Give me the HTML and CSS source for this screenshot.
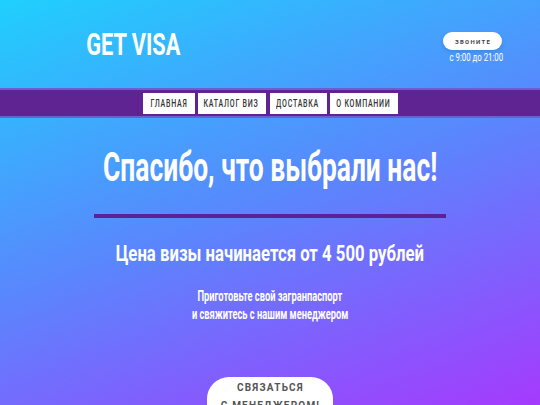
FILE: index.html
```html
<!DOCTYPE html>
<html lang="ru">
<head>
<meta charset="utf-8">
<link rel="stylesheet" href="styles.css">
</head>
<body>
<div class="page">
  <header class="top">
    <div class="logo"><span class="cond">GET VISA</span></div>
    <div class="contact">
      <button class="call">ЗВОНИТЕ</button>
      <div class="hours"><span class="cond">с 9:00 до 21:00</span></div>
    </div>
  </header>
  <nav class="nav">
    <a class="item w1"><span class="cond">ГЛАВНАЯ</span></a>
    <a class="item w2"><span class="cond">КАТАЛОГ ВИЗ</span></a>
    <a class="item w3"><span class="cond">ДОСТАВКА</span></a>
    <a class="item w4"><span class="cond">О КОМПАНИИ</span></a>
  </nav>
  <main class="hero">
    <h1 class="title"><span class="cond">Спасибо, что выбрали нас!</span></h1>
    <div class="rule"></div>
    <h2 class="price"><span class="cond">Цена визы начинается от 4 500 рублей</span></h2>
    <p class="note"><span class="cond">Приготовьте свой загранпаспорт</span><span class="cond">и свяжитесь с нашим менеджером</span></p>
    <button class="cta"><span>СВЯЗАТЬСЯ</span><span>С МЕНЕДЖЕРОМ!</span></button>
  </main>
</div>
</body>
</html>
```
FILE: styles.css
```css
* { box-sizing: border-box; }
html, body { margin: 0; padding: 0; }
body {
  width: 540px;
  height: 405px;
  overflow: hidden;
  font-family: Roboto, "Liberation Sans", sans-serif;
  color: #fff;
}
.page {
  width: 540px;
  height: 405px;
  overflow: hidden;
  background: linear-gradient(160deg, #1fd0fd 0%, #5a86fd 50%, #a53afd 100%);
  display: flex;
  flex-direction: column;
}
.cond {
  display: inline-block;
  white-space: nowrap;
  transform-origin: center;
}
.top {
  flex: 0 0 88px;
  display: flex;
  justify-content: space-between;
  padding: 0 38px 0 86px;
}
.logo {
  font-weight: bold;
  font-size: 32px;
  line-height: 32px;
  padding-top: 28px;
  width: 95px;
  display: flex;
  justify-content: center;
}
.logo .cond { transform: scaleX(0.68); }
.contact {
  padding-top: 32px;
  display: flex;
  flex-direction: column;
  align-items: flex-end;
}
.call {
  width: 59px;
  height: 18px;
  border: none;
  border-radius: 9px;
  background: #fff;
  color: #444;
  font-family: Roboto, sans-serif;
  font-size: 6px;
  font-weight: bold;
  letter-spacing: 1.3px;
  padding: 0 0 0 1px;
  box-shadow: 0 2px 4px rgba(0,0,0,0.12);
}
.hours {
  font-size: 10px;
  line-height: 12px;
  margin-top: 2px;
  width: 52px;
  display: flex;
  justify-content: center;
}
.hours .cond { transform: scaleX(0.78); }
.nav {
  flex: 0 0 30px;
  background: #5f2392;
  border-top: 2px solid #6b5fd2;
  border-bottom: 2px solid #6b5fd2;
  display: flex;
  justify-content: center;
  align-items: center;
  gap: 3px;
}
.item {
  background: #fff;
  color: #333;
  font-size: 11px;
  font-weight: 500;
  letter-spacing: 1.2px;
  height: 21px;
  display: flex;
  align-items: center;
  justify-content: center;
}
.item .cond { transform: scaleX(0.64); }
.w1 { width: 52px; }
.w2 { width: 68px; }
.w3 { width: 57px; margin-left: 1px; }
.w4 { width: 68px; }
.hero {
  display: flex;
  flex-direction: column;
  align-items: center;
}
.title {
  margin: 30px 0 0;
  font-size: 40px;
  line-height: 40px;
  font-weight: bold;
  width: 340px;
  display: flex;
  justify-content: center;
}
.title .cond { transform: scaleX(0.66); }
.rule {
  width: 352px;
  height: 4px;
  background: #5a2296;
  margin-top: 26px;
}
.price {
  margin: 23px 0 0;
  font-size: 22px;
  line-height: 26px;
  font-weight: bold;
  width: 310px;
  display: flex;
  justify-content: center;
}
.price .cond { transform: scaleX(0.76); }
.note {
  margin: 20px 0 0;
  font-size: 15px;
  line-height: 18px;
  font-weight: bold;
  width: 160px;
  display: flex;
  flex-direction: column;
  align-items: center;
}
.note .cond { transform: scaleX(0.62); }
.cta {
  margin-top: 54px;
  flex: 0 0 56px;
  width: 126px;
  height: 56px;
  border: none;
  border-radius: 22px;
  background: #fff;
  color: #555;
  font-family: Roboto, sans-serif;
  font-size: 10px;
  font-weight: bold;
  letter-spacing: 1.2px;
  line-height: 18px;
  display: flex;
  flex-direction: column;
  align-items: center;
  padding: 2px 0 0 1px;
}
```
